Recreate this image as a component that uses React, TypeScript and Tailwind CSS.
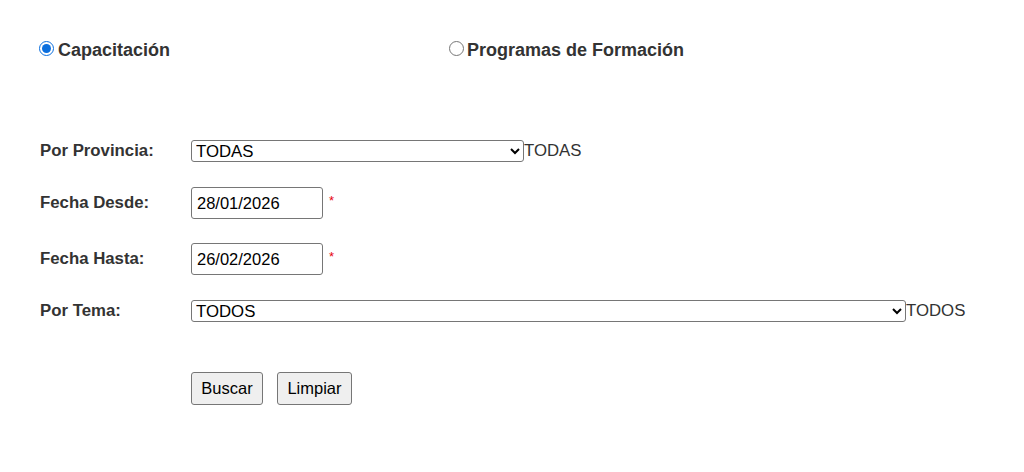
import React from "react";

export default function App() {
  return (
    <div className="w-[1024px] h-[472px] bg-white text-[#333333] font-['Liberation_Sans',Arial,sans-serif]">
      <div className="pt-[37px] pl-[39px] flex">
        <label className="flex items-center w-[410px] text-[18px] font-bold">
          <input type="radio" name="tipo" defaultChecked className="m-0 w-[15px] h-[15px] mr-[4px] -mt-[4px] accent-[#0b6fde]" />
          Capacitación
        </label>
        <label className="flex items-center text-[18px] font-bold">
          <input type="radio" name="tipo" className="m-0 w-[15px] h-[15px] mr-[3px] -mt-[4px]" />
          Programas de Formación
        </label>
      </div>

      <div className="pt-[76px] pl-[40px] flex flex-col text-[16.8px]">
        <div className="flex items-center h-[22px]">
          <div className="w-[151px] font-bold">Por Provincia:</div>
          <select className="w-[333px] h-[22px] border border-[#767676] rounded-[3px] pl-0 text-black bg-white" defaultValue="TODAS">
            <option>TODAS</option>
          </select>
          <span>TODAS</span>
        </div>

        <div className="flex items-center h-[32px] mt-[25px]">
          <div className="w-[151px] font-bold">Fecha Desde:</div>
          <input type="text" defaultValue="28/01/2026" className="w-[132px] h-[32px] border border-[#767676] rounded-[3px] px-[5px] text-black bg-white text-[16.5px]" />
          <span className="text-red-600 text-[13px] ml-[6px] -mt-[5px]">*</span>
        </div>

        <div className="flex items-center h-[32px] mt-[24px]">
          <div className="w-[151px] font-bold">Fecha Hasta:</div>
          <input type="text" defaultValue="26/02/2026" className="w-[132px] h-[32px] border border-[#767676] rounded-[3px] px-[5px] text-black bg-white text-[16.5px]" />
          <span className="text-red-600 text-[13px] ml-[6px] -mt-[5px]">*</span>
        </div>

        <div className="flex items-center h-[22px] mt-[25px]">
          <div className="w-[151px] font-bold">Por Tema:</div>
          <select className="w-[715px] h-[22px] border border-[#767676] rounded-[3px] pl-0 text-black bg-white" defaultValue="TODOS">
            <option>TODOS</option>
          </select>
          <span>TODOS</span>
        </div>

        <div className="flex items-center mt-[50px] pl-[151px] gap-[14px]">
          <button className="w-[72px] h-[33px] border border-[#767676] rounded-[3px] bg-[#efefef] text-black text-[16.5px]">Buscar</button>
          <button className="w-[75px] h-[33px] border border-[#767676] rounded-[3px] bg-[#efefef] text-black text-[16.5px]">Limpiar</button>
        </div>
      </div>
    </div>
  );
}
